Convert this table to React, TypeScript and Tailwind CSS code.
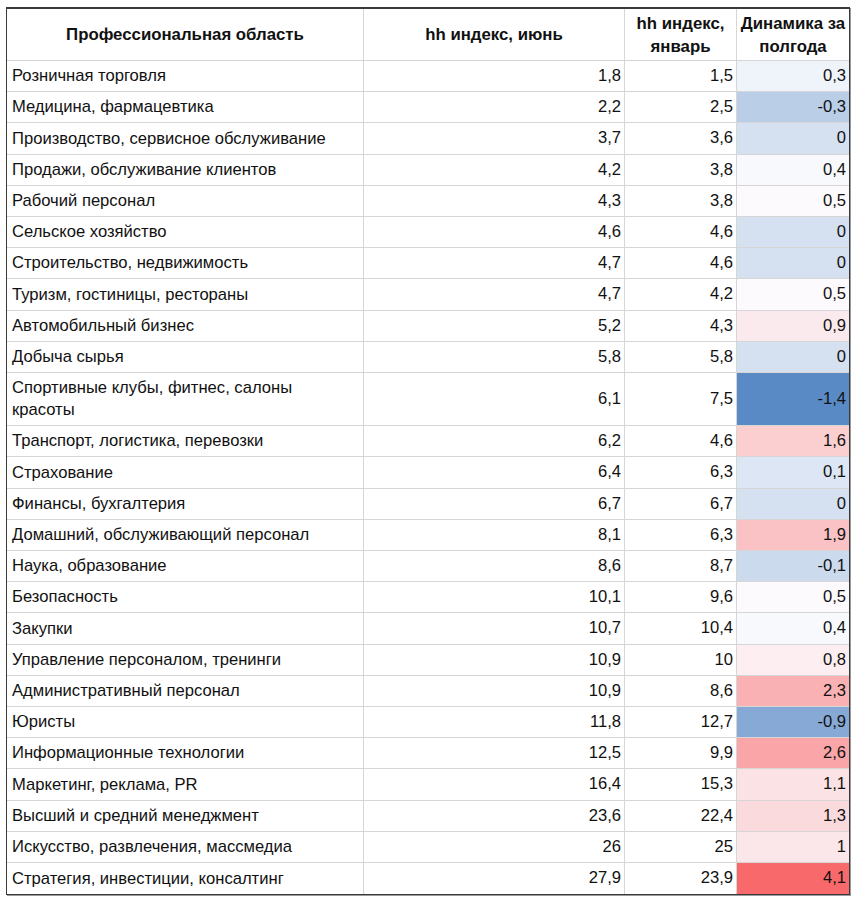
import React from "react";

type Row = { name: string; jun: string; jan: string; diff: string };

const ROWS: Row[] = [
  { name: "Розничная торговля", jun: "1,8", jan: "1,5", diff: "0,3" },
  { name: "Медицина, фармацевтика", jun: "2,2", jan: "2,5", diff: "-0,3" },
  { name: "Производство, сервисное обслуживание", jun: "3,7", jan: "3,6", diff: "0" },
  { name: "Продажи, обслуживание клиентов", jun: "4,2", jan: "3,8", diff: "0,4" },
  { name: "Рабочий персонал", jun: "4,3", jan: "3,8", diff: "0,5" },
  { name: "Сельское хозяйство", jun: "4,6", jan: "4,6", diff: "0" },
  { name: "Строительство, недвижимость", jun: "4,7", jan: "4,6", diff: "0" },
  { name: "Туризм, гостиницы, рестораны", jun: "4,7", jan: "4,2", diff: "0,5" },
  { name: "Автомобильный бизнес", jun: "5,2", jan: "4,3", diff: "0,9" },
  { name: "Добыча сырья", jun: "5,8", jan: "5,8", diff: "0" },
  { name: "Спортивные клубы, фитнес, салоны красоты", jun: "6,1", jan: "7,5", diff: "-1,4" },
  { name: "Транспорт, логистика, перевозки", jun: "6,2", jan: "4,6", diff: "1,6" },
  { name: "Страхование", jun: "6,4", jan: "6,3", diff: "0,1" },
  { name: "Финансы, бухгалтерия", jun: "6,7", jan: "6,7", diff: "0" },
  { name: "Домашний, обслуживающий персонал", jun: "8,1", jan: "6,3", diff: "1,9" },
  { name: "Наука, образование", jun: "8,6", jan: "8,7", diff: "-0,1" },
  { name: "Безопасность", jun: "10,1", jan: "9,6", diff: "0,5" },
  { name: "Закупки", jun: "10,7", jan: "10,4", diff: "0,4" },
  { name: "Управление персоналом, тренинги", jun: "10,9", jan: "10", diff: "0,8" },
  { name: "Административный персонал", jun: "10,9", jan: "8,6", diff: "2,3" },
  { name: "Юристы", jun: "11,8", jan: "12,7", diff: "-0,9" },
  { name: "Информационные технологии", jun: "12,5", jan: "9,9", diff: "2,6" },
  { name: "Маркетинг, реклама, PR", jun: "16,4", jan: "15,3", diff: "1,1" },
  { name: "Высший и средний менеджмент", jun: "23,6", jan: "22,4", diff: "1,3" },
  { name: "Искусство, развлечения, массмедиа", jun: "26", jan: "25", diff: "1" },
  { name: "Стратегия, инвестиции, консалтинг", jun: "27,9", jan: "23,9", diff: "4,1" },
];

// excel-style 3 colour scale: min blue, 50th percentile white, max red
const HEAT: Record<string, string> = {
  "-1,4": "bg-[#5a8ac6]",
  "-0,9": "bg-[#86a9d5]",
  "-0,3": "bg-[#bacee8]",
  "-0,1": "bg-[#ccdaee]",
  "0": "bg-[#d5e0f1]",
  "0,1": "bg-[#dde6f4]",
  "0,3": "bg-[#eff3fa]",
  "0,4": "bg-[#f8f9fd]",
  "0,5": "bg-[#fcfafd]",
  "0,8": "bg-[#fceef1]",
  "0,9": "bg-[#fbeaed]",
  "1": "bg-[#fbe6e9]",
  "1,1": "bg-[#fbe2e5]",
  "1,3": "bg-[#fbdadd]",
  "1,6": "bg-[#fbced0]",
  "1,9": "bg-[#fac2c4]",
  "2,3": "bg-[#fab1b4]",
  "2,6": "bg-[#faa5a8]",
  "4,1": "bg-[#f8696b]",
};

const COLS = "grid grid-cols-[357px_261px_112px_112px]";

export default function App() {
  return (
    <div className="min-h-[901px] bg-white pl-[6px] pt-[7px] font-['Liberation_Sans',Arial,sans-serif] text-[16.6px] text-[#111]">
      <div className="w-[844px] border border-t-2 border-[#3a3a3a] shadow-[1px_1px_0_#9a9a9a]">
        <div className={`${COLS} h-[52px] border-b border-[#d6d6d6] text-[16.8px] font-bold leading-[23px]`}>
          <div className="flex items-center justify-center border-r border-[#d6d6d6]">
            Профессиональная область
          </div>
          <div className="flex items-center justify-center border-r border-[#d6d6d6]">
            hh индекс, июнь
          </div>
          <div className="flex items-center justify-center whitespace-nowrap border-r border-[#d6d6d6] text-center">
            hh индекс,
            <br />
            январь
          </div>
          <div className="flex items-center justify-center whitespace-nowrap text-center">
            Динамика за
            <br />
            полгода
          </div>
        </div>

        {ROWS.map((r, i) => {
          const last = i === ROWS.length - 1;
          const tall = r.name.length > 38;
          const h = tall ? "h-[53px]" : i % 5 === 2 ? "h-[32px]" : "h-[31px]";
          return (
            <div
              key={r.name}
              className={`${COLS} ${h} ${last ? "" : "border-b border-[#d6d6d6]"}`}
            >
              <div className="flex items-center border-r border-[#d6d6d6] pl-[5px] pr-2 leading-[22px]">
                {tall ? (
                  <span>
                    Спортивные клубы, фитнес, салоны
                    <br />
                    красоты
                  </span>
                ) : (
                  r.name
                )}
              </div>
              <div className="flex items-center justify-end border-r border-[#d6d6d6] pr-[3px]">
                {r.jun}
              </div>
              <div className="flex items-center justify-end border-r border-[#d6d6d6] pr-[3px]">
                {r.jan}
              </div>
              <div className={`flex items-center justify-end pr-[3px] ${HEAT[r.diff]}`}>
                {r.diff}
              </div>
            </div>
          );
        })}
      </div>
    </div>
  );
}
